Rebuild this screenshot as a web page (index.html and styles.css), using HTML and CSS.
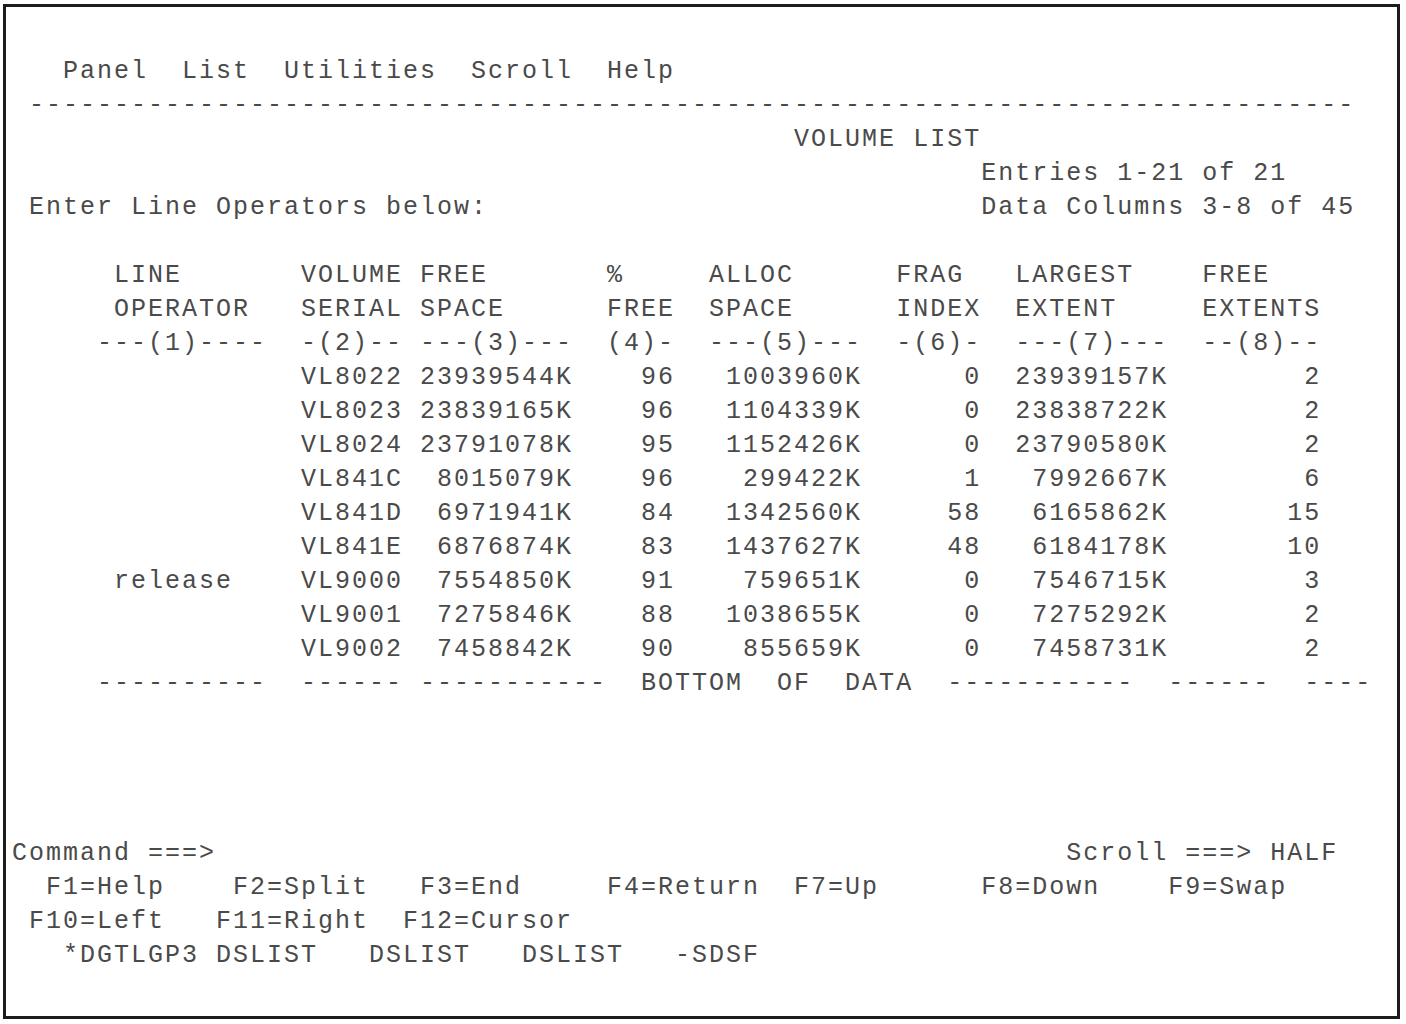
FILE: index.html
```html
<!DOCTYPE html>
<html lang="en">
<head>
<meta charset="utf-8">
<title>VOLUME LIST</title>
<link rel="stylesheet" href="styles.css">
</head>
<body>
<div class="terminal">
<pre class="screen">   Panel  List  Utilities  Scroll  Help
 ------------------------------------------------------------------------------
                                              VOLUME LIST
                                                         Entries 1-21 of 21
 Enter Line Operators below:                             Data Columns 3-8 of 45

      LINE       VOLUME FREE       %     ALLOC      FRAG   LARGEST    FREE
      OPERATOR   SERIAL SPACE      FREE  SPACE      INDEX  EXTENT     EXTENTS
     ---(1)----  -(2)-- ---(3)---  (4)-  ---(5)---  -(6)-  ---(7)---  --(8)--
                 VL8022 23939544K    96   1003960K      0  23939157K        2
                 VL8023 23839165K    96   1104339K      0  23838722K        2
                 VL8024 23791078K    95   1152426K      0  23790580K        2
                 VL841C  8015079K    96    299422K      1   7992667K        6
                 VL841D  6971941K    84   1342560K     58   6165862K       15
                 VL841E  6876874K    83   1437627K     48   6184178K       10
      release    VL9000  7554850K    91    759651K      0   7546715K        3
                 VL9001  7275846K    88   1038655K      0   7275292K        2
                 VL9002  7458842K    90    855659K      0   7458731K        2
     ----------  ------ -----------  BOTTOM  OF  DATA  -----------  ------  ----




Command ===>                                                  Scroll ===> HALF
  F1=Help    F2=Split   F3=End     F4=Return  F7=Up      F8=Down    F9=Swap
 F10=Left   F11=Right  F12=Cursor
   *DGTLGP3 DSLIST   DSLIST   DSLIST   -SDSF</pre>
</div>
</body>
</html>
```
FILE: styles.css
```css
html, body {
  margin: 0;
  padding: 0;
  background: #ffffff;
}

.terminal {
  box-sizing: border-box;
  width: 1397px;
  height: 1015px;
  margin: 4px 0 0 3px;
  border: 3px solid #1c1c1c;
  padding: 48px 0 0 6px;
  background: #ffffff;
}

.screen {
  margin: 0;
  font-family: "Liberation Mono", "DejaVu Sans Mono", monospace;
  font-size: 25px;
  letter-spacing: 2px;
  line-height: 34px;
  color: #4a4a4a;
  white-space: pre;
}
```
